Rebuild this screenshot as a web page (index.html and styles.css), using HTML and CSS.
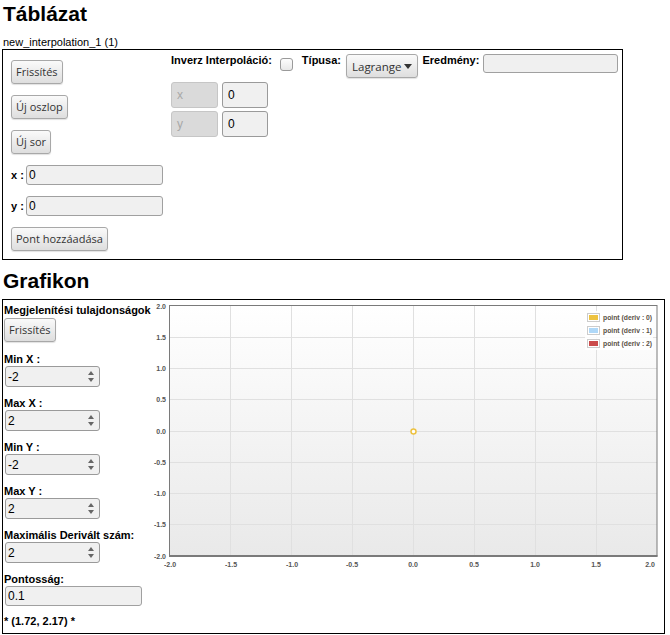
FILE: index.html
```html
<!DOCTYPE html>
<html lang="hu">
<head>
<meta charset="utf-8">
<title>Táblázat</title>
<link rel="stylesheet" href="styles.css">
</head>
<body>
<h1 class="title">Táblázat</h1>
<div class="caption">new_interpolation_1 (1)</div>
<section class="table-box">
  <div class="left-col">
    <button class="btn">Frissítés</button>
    <button class="btn">Új oszlop</button>
    <button class="btn">Új sor</button>
    <div class="field-row"><span class="lbl">x :</span><input class="txt wide" value="0"></div>
    <div class="field-row"><span class="lbl">y :</span><input class="txt wide" value="0"></div>
    <button class="btn">Pont hozzáadása</button>
  </div>
  <div class="right-col">
    <div class="toolbar">
      <span class="lbl">Inverz Interpoláció:</span>
      <span class="checkbox"></span>
      <span class="lbl typ">Típusa:</span>
      <button class="btn select">Lagrange<span class="caret"></span></button>
      <span class="lbl res">Eredmény:</span>
      <input class="txt result">
    </div>
    <div class="grid">
      <div class="cell head">x</div><div class="cell val">0</div>
      <div class="cell head">y</div><div class="cell val">0</div>
    </div>
  </div>
</section>

<h1 class="title second">Grafikon</h1>
<section class="graph-box">
  <div class="props">
    <div class="lbl">Megjelenítési tulajdonságok</div>
    <button class="btn refresh">Frissítés</button>
    <div class="lbl grp first">Min X :</div>
    <div class="spin"><span class="spin-val">-2</span><span class="arrows"><i class="up"></i><i class="down"></i></span></div>
    <div class="lbl grp">Max X :</div>
    <div class="spin"><span class="spin-val">2</span><span class="arrows"><i class="up"></i><i class="down"></i></span></div>
    <div class="lbl grp">Min Y :</div>
    <div class="spin"><span class="spin-val">-2</span><span class="arrows"><i class="up"></i><i class="down"></i></span></div>
    <div class="lbl grp">Max Y :</div>
    <div class="spin"><span class="spin-val">2</span><span class="arrows"><i class="up"></i><i class="down"></i></span></div>
    <div class="lbl grp">Maximális Derivált szám:</div>
    <div class="spin"><span class="spin-val">2</span><span class="arrows"><i class="up"></i><i class="down"></i></span></div>
    <div class="lbl grp">Pontosság:</div>
    <input class="txt prec" value="0.1">
    <div class="lbl coords">* (1.72, 2.17) *</div>
  </div>
  <svg class="chart" width="514" height="274" viewBox="0 0 514 274">
    <defs>
      <linearGradient id="bg" x1="0" y1="0" x2="0" y2="1">
        <stop offset="0" stop-color="#ffffff"/>
        <stop offset="1" stop-color="#e9e9e9"/>
      </linearGradient>
    </defs>
    <rect x="21" y="6" width="487" height="250" fill="url(#bg)"/>
    <g stroke="#e0e0e0" stroke-width="1">
      <line x1="81.5" y1="6" x2="81.5" y2="256"/>
      <line x1="142.5" y1="6" x2="142.5" y2="256"/>
      <line x1="203.5" y1="6" x2="203.5" y2="256"/>
      <line x1="264.5" y1="6" x2="264.5" y2="256"/>
      <line x1="325.5" y1="6" x2="325.5" y2="256"/>
      <line x1="386.5" y1="6" x2="386.5" y2="256"/>
      <line x1="447.5" y1="6" x2="447.5" y2="256"/>
      <line x1="21" y1="37.5" x2="508" y2="37.5"/>
      <line x1="21" y1="68.5" x2="508" y2="68.5"/>
      <line x1="21" y1="99.5" x2="508" y2="99.5"/>
      <line x1="21" y1="131.5" x2="508" y2="131.5"/>
      <line x1="21" y1="162.5" x2="508" y2="162.5"/>
      <line x1="21" y1="193.5" x2="508" y2="193.5"/>
      <line x1="21" y1="224.5" x2="508" y2="224.5"/>
    </g>
    <rect x="20.5" y="5.5" width="487.5" height="250.5" fill="none" stroke="#7a7a7a" stroke-width="1"/>
    <line x1="20" y1="256" x2="508.5" y2="256" stroke="#7a7a7a" stroke-width="2"/>
    <g class="ticks" text-anchor="end">
      <text x="17" y="9">2.0</text>
      <text x="17" y="40">1.5</text>
      <text x="17" y="71">1.0</text>
      <text x="17" y="102">0.5</text>
      <text x="17" y="134">0.0</text>
      <text x="17" y="165">-0.5</text>
      <text x="17" y="196">-1.0</text>
      <text x="17" y="227">-1.5</text>
      <text x="17" y="259">-2.0</text>
    </g>
    <g class="ticks" text-anchor="middle">
      <text x="21" y="267">-2.0</text>
      <text x="82" y="267">-1.5</text>
      <text x="143" y="267">-1.0</text>
      <text x="203" y="267">-0.5</text>
      <text x="264" y="267">0.0</text>
      <text x="325" y="267">0.5</text>
      <text x="386" y="267">1.0</text>
      <text x="447" y="267">1.5</text>
      <text x="501" y="267">2.0</text>
    </g>
    <circle cx="264.5" cy="131.5" r="2.5" fill="#ffffff" stroke="#edc240" stroke-width="1.5"/>
    <rect x="436" y="11" width="68" height="39" fill="#ffffff" opacity="0.85"/>
    <g>
      <rect x="438.5" y="13.5" width="12" height="8" fill="none" stroke="#cccccc"/>
      <rect x="440" y="15" width="9" height="5" fill="#edc240"/>
      <rect x="438.5" y="26.5" width="12" height="8" fill="none" stroke="#cccccc"/>
      <rect x="440" y="28" width="9" height="5" fill="#afd8f8"/>
      <rect x="438.5" y="39.5" width="12" height="8" fill="none" stroke="#cccccc"/>
      <rect x="440" y="41" width="9" height="5" fill="#cb4b4b"/>
    </g>
    <g class="legend">
      <text x="454" y="20">point (deriv : 0)</text>
      <text x="454" y="33">point (deriv : 1)</text>
      <text x="454" y="46">point (deriv : 2)</text>
    </g>
  </svg>
</section>
</body>
</html>
```
FILE: styles.css
```css
html, body {
  margin: 0;
  padding: 0;
  background: #ffffff;
}
body {
  padding: 0 2px;
  font-family: "Liberation Sans", Arial, sans-serif;
  font-size: 11px;
  color: #000;
}
.title {
  font-size: 21px;
  line-height: 24px;
  font-weight: bold;
  margin: 2px 0 10px 1px;
}
.title.second {
  margin: 9px 0 6px 1px;
}
.caption {
  line-height: 13px;
  margin-left: 1px;
}
.lbl {
  font-weight: bold;
  line-height: 13px;
  white-space: nowrap;
}
.btn {
  font-family: "Open Sans", sans-serif;
  font-size: 11px;
  color: #333;
  height: 24px;
  padding: 0 4px;
  border: 1px solid #a8a8a8;
  border-radius: 3px;
  background: linear-gradient(#fafafa, #dedede);
  box-shadow: 0 1px 1px rgba(0,0,0,0.12);
  line-height: 22px;
  align-self: flex-start;
  margin: 0;
}
.txt {
  font-family: "Liberation Sans", Arial, sans-serif;
  font-size: 12px;
  box-sizing: border-box;
  height: 20px;
  border: 1px solid #a0a0a0;
  border-radius: 3px;
  background: #f0f0f0;
  padding: 0 2px;
  margin: 0;
  color: #000;
}

/* Table box */
.table-box {
  width: 611px;
  border: 1px solid #000;
  display: flex;
  gap: 8px;
  padding: 4px 0 0 8px;
  box-sizing: content-box;
  height: 205px;
}
.left-col {
  width: 152px;
  display: flex;
  flex-direction: column;
  gap: 11px;
  padding-top: 6px;
}
.field-row {
  display: flex;
  align-items: center;
  gap: 4px;
}
.field-row .lbl { width: 11px; }
.txt.wide { width: 137px; }
.right-col {
  display: flex;
  flex-direction: column;
  gap: 4px;
}
.toolbar {
  display: flex;
  align-items: flex-start;
}
.checkbox {
  width: 13px;
  height: 13px;
  box-sizing: border-box;
  border: 1px solid #9a9a9a;
  border-radius: 3px;
  background: linear-gradient(#fdfdfd, #e8e8e8);
  margin: 4px 0 0 8px;
}
.typ { margin-left: 9px; }
.select {
  margin-left: 5px;
  height: 24px;
  font-size: 11.5px;
  padding: 2px 5px 0 5px;
  display: flex;
  align-items: center;
  gap: 3px;
  line-height: 24px;
}
.caret {
  width: 0;
  height: 0;
  border-left: 4px solid transparent;
  border-right: 4px solid transparent;
  border-top: 5px solid #333;
  margin-top: -1px;
}
.res { margin-left: 4px; }
.txt.result {
  width: 135px;
  margin-left: 4px;
  height: 19px;
}
.grid {
  display: grid;
  grid-template-columns: 47px 46px;
  column-gap: 4px;
  row-gap: 3px;
}
.cell {
  box-sizing: border-box;
  height: 26px;
  border-radius: 3px;
  font-size: 12px;
  line-height: 24px;
  padding-left: 5px;
}
.cell.head {
  background: #dadada;
  border: 1px solid #c6c6c6;
  color: #a8a8a8;
}
.cell.val {
  background: #f0f0f0;
  border: 1px solid #9a9a9a;
  color: #000;
}

/* Graph box */
.graph-box {
  width: 661px;
  border: 1px solid #000;
  display: flex;
  align-items: flex-start;
}
.props {
  width: 145px;
  padding: 4px 0 5px 1px;
  display: flex;
  flex-direction: column;
  align-items: flex-start;
}
.refresh {
  margin-top: 1px;
}
.grp { margin-top: 10px; }
.grp.first { margin-top: 11px; }
.spin {
  box-sizing: border-box;
  width: 95px;
  height: 21px;
  border: 1px solid #9a9a9a;
  border-radius: 3px;
  background: #f0f0f0;
  display: flex;
  align-items: center;
  justify-content: space-between;
  padding: 0 5px 0 2px;
  margin-left: 1px;
}
.spin-val {
  font-size: 12px;
}
.arrows {
  display: flex;
  flex-direction: column;
  gap: 3px;
}
.arrows i {
  width: 0;
  height: 0;
  border-left: 3px solid transparent;
  border-right: 3px solid transparent;
}
.arrows .up { border-bottom: 4px solid #666; }
.arrows .down { border-top: 4px solid #666; }
.txt.prec {
  width: 137px;
  height: 20px;
  margin-left: 1px;
  font-size: 12px;
}
.coords { margin-top: 9px; }
.chart {
  display: block;
  flex: none;
}
.ticks text {
  font-family: "Liberation Sans", Arial, sans-serif;
  font-size: 7px;
  font-weight: bold;
  fill: #545454;
}
.legend text {
  font-family: "Liberation Sans", Arial, sans-serif;
  font-size: 6.8px;
  font-weight: bold;
  fill: #5a5046;
}
```
